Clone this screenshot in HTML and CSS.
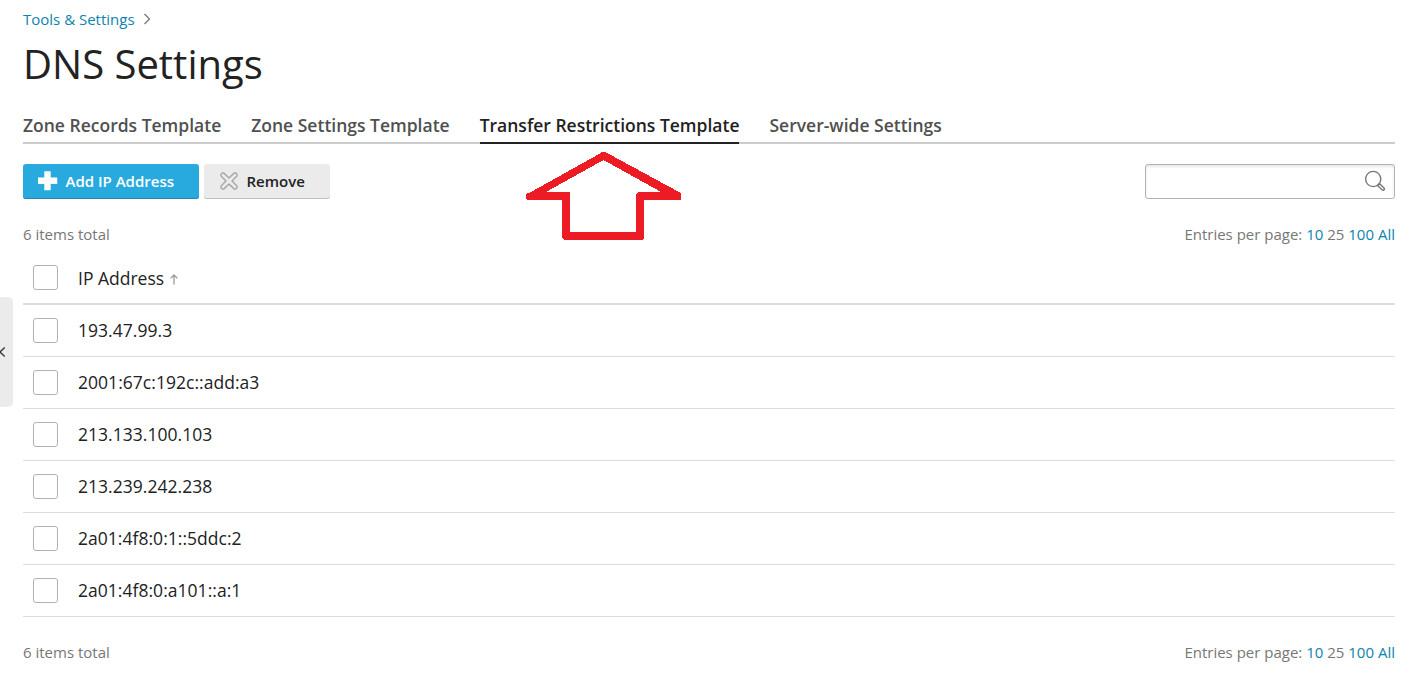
FILE: index.html
```html
<!DOCTYPE html>
<html lang="en">
<head>
<meta charset="utf-8">
<title>DNS Settings</title>
<link rel="stylesheet" href="styles.css">
</head>
<body>
<div class="sidebar-toggle"><svg width="6" height="12" viewBox="0 0 6 12"><path d="M4.7 1.5L0 6l4.7 4.5" fill="none" stroke="#333" stroke-width="1.3"/></svg></div>
<main class="page">
  <nav class="breadcrumb"><a href="#">Tools &amp; Settings</a><svg width="8" height="12" viewBox="0 0 8 12"><path d="M1.500 1l5 5-5 5" fill="none" stroke="#777" stroke-width="1.3"/></svg></nav>
  <h1 class="title">DNS Settings</h1>
  <nav class="tabs">
    <a class="tab tab-records" href="#">Zone Records Template</a>
    <a class="tab tab-zone" href="#">Zone Settings Template</a>
    <a class="tab tab-active" href="#">Transfer Restrictions Template</a>
    <a class="tab tab-server" href="#">Server-wide Settings</a>
  </nav>
  <div class="toolbar">
    <button class="btn btn-add"><svg width="20" height="20" viewBox="0 0 20 20"><path d="M6.3 0.3h6.4v6.3h6.5v6.4h-6.5v6.3h-6.4v-6.3h-6.3v-6.4h6.3z" fill="#fff"/></svg><span>Add IP Address</span></button>
    <button class="btn btn-remove"><svg width="20" height="20" viewBox="0 0 20 20"><path d="M4.9 2.1L10 7l5.1-4.9q1-.7 2 .2l.6.6q.9 1 .2 2L13 10l4.9 5.1q.7 1-.2 2l-.6.6q-1 .9-2 .2L10 13l-5.1 4.9q-1 .7-2-.2l-.6-.6q-.9-1-.2-2L7 10 2.1 4.9q-.7-1 .2-2l.6-.6q1-.9 2-.2z" fill="none" stroke="#a9a9a9" stroke-width="1.5" stroke-linejoin="round"/></svg><span>Remove</span></button>
    <div class="search"><svg width="22" height="22" viewBox="0 0 22 22"><g fill="none" stroke="#777" stroke-width="1.4"><circle cx="9.2" cy="9" r="7.6"/><path d="M13.7 15.7l2-2 4.5 4.5q.6 1-.2 1.7-.8.7-1.6.1zM13.8 13.8l1 1"/></g></svg></div>
  </div>
  <div class="pager pager-top"><span>6 items total</span><span>Entries per page: <a href="#">10</a> 25 <a href="#">100</a> <a href="#">All</a></span></div>
  <div class="list">
    <div class="row head"><i class="check"></i><span>IP Address</span><svg class="sort" width="8" height="11" viewBox="0 0 8 11"><path d="M4 10.5V1M.6 4.4L4 1l3.4 3.400" fill="none" stroke="#999" stroke-width="1.3"/></svg></div>
    <div class="row"><i class="check"></i><span>193.47.99.3</span></div>
    <div class="row"><i class="check"></i><span>2001:67c:192c::add:a3</span></div>
    <div class="row"><i class="check"></i><span>213.133.100.103</span></div>
    <div class="row"><i class="check"></i><span>213.239.242.238</span></div>
    <div class="row"><i class="check"></i><span>2a01:4f8:0:1::5ddc:2</span></div>
    <div class="row"><i class="check"></i><span>2a01:4f8:0:a101::a:1</span></div>
  </div>
  <div class="pager pager-bottom"><span>6 items total</span><span>Entries per page: <a href="#">10</a> 25 <a href="#">100</a> <a href="#">All</a></span></div>
</main>
<svg class="callout" width="156" height="89" viewBox="0 0 156 89" shape-rendering="crispEdges"><path fill="#ed1c24" fill-rule="evenodd" d="M76 1h3l4 2L153 41l2 2v6h-37v38l-1 2H38l-2-2V49H2l-2-1v-5L5 41 73 3zM77.500 9L20 41h23l1 1v39h66V43l2-2h23z"/></svg>
</body>
</html>
```

FILE: styles.css
```css
* { box-sizing: border-box; }
body { margin: 0; height: 682px; overflow: hidden; background: #fff; color: #222; font: 15px/20px "Open Sans", "Noto Sans", sans-serif; }
a { color: #0d83b0; text-decoration: none; }
svg { display: block; flex: none; }
.page { padding: 9px 28px 0 23px; }
.breadcrumb { display: flex; align-items: center; gap: 8px; height: 20px; }
.title { margin: 8px 0 0; height: 54px; font-size: 40px; line-height: 54px; font-weight: 400; }
.tabs { display: flex; gap: 30px; margin-top: 21px; height: 32px; border-bottom: 2px solid #ccc; }
.tab { height: 32px; color: #505050; font-size: 17.5px; line-height: 27px; font-weight: 600; white-space: nowrap; }
.tab-active { color: #222; border-bottom: 2px solid #222; }
.toolbar { display: flex; gap: 5px; margin-top: 20px; height: 35px; }
.btn { display: flex; align-items: center; gap: 7.5px; height: 35px; padding: 0 0 1px 15px; border: 0; border-radius: 3px; font: 600 15px/20px "Open Sans", sans-serif; white-space: nowrap; }
.btn-add { width: 176px; background: #28aade; color: #fff; box-shadow: inset 0 -1px #2089b3; }
.btn-remove { width: 126px; background: #ebebeb; color: #222; box-shadow: inset 0 -1px #bebebe; }
.search { display: flex; align-items: center; justify-content: flex-end; width: 250px; margin-left: auto; padding: 0 8px 1px 0; border: 1px solid #b2b2b2; border-radius: 3px; box-shadow: inset 0 2px 3px #e8e8e8; }
.pager { display: flex; justify-content: space-between; height: 20px; color: #777; }
.pager-top { margin-top: 25px; }
.pager-bottom { margin-top: 25px; }
.list { margin-top: 7px; }
.row { display: flex; align-items: center; height: 52px; padding-left: 10px; border-bottom: 1px solid #ddd; font-size: 17.5px; line-height: 24px; }
.row span { padding-bottom: 2px; letter-spacing: 0.03px; }
.head { height: 54px; border-bottom-width: 2px; }
.head span { padding: 1px 0 0; letter-spacing: 0; }
.check { width: 25px; height: 25px; margin-right: 20px; border: 1px solid #b2b2b2; border-radius: 3px; }
.sort { margin: 5px 0 0 6px; }
.sidebar-toggle { position: absolute; left: 0; top: 297px; display: flex; align-items: center; width: 13px; height: 110px; border-radius: 0 5px 5px 0; background: #ebebeb; }
.callout { position: absolute; left: 526px; top: 151px; }
```
